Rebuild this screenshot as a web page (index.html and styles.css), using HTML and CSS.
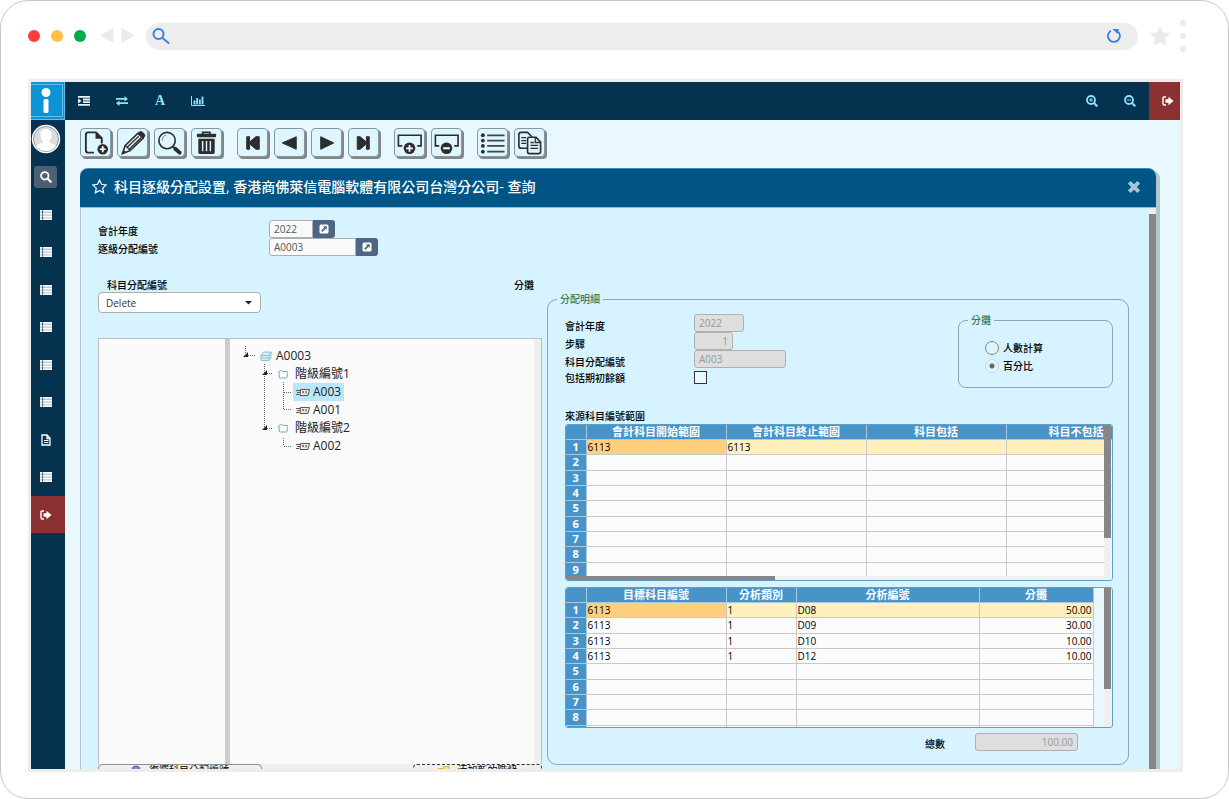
FILE: index.html
```html
<!DOCTYPE html>
<html lang="zh-Hant">
<head>
<meta charset="utf-8">
<title>科目逐級分配設置</title>
<link rel="stylesheet" href="styles.css">
</head>
<body>
<svg class="defs" aria-hidden="true">
  <symbol id="i-list" viewBox="0 0 12 10"><path fill="#b9c8d0" d="M0 0h12v10H0z"/><path fill="#fff" d="M0 0h12v1.500H0zM0 3h12v1.500H0zM0 5.800h12v1.500H0zM0 8.500h12V10H0z"/><path fill="#3c5f75" d="M2.200 0h.9v10h-.9z"/></symbol>
  <symbol id="i-out" viewBox="0 0 12 10"><path fill="none" stroke="currentColor" stroke-width="1.400" d="M4 1H2.200Q1 1 1 2.200v5.600Q1 9 2.200 9H4"/><path fill="currentColor" d="M3.500 3.200H6.500V.8L11.500 5 6.500 9.200V6.800H3.500z"/></symbol>
  <symbol id="i-link" viewBox="0 0 10 10"><rect x=".5" y=".5" width="9" height="9" rx="1.500" fill="#fff"/><path fill="#4d6684" d="M4 2.300h3.700V6L6.500 4.800 3.400 7.900l-1.200-1.200L5.200 3.500z"/></symbol>
  <symbol id="i-form" viewBox="0 0 14 9"><path stroke="#555" fill="none" d="M0 2.500h4M1 4.500h3M0 6.500h3"/><path fill="#e6eadf" stroke="#555" d="M4.500 1.500h9l-1.500 6h-8z"/><path fill="#c33" d="M6.300 3h1.500v2H6.300z"/><path fill="#5a9a5a" d="M9.300 3h1.500v2.500H9.300z"/></symbol>
  <symbol id="i-folder" viewBox="0 0 11 10"><path fill="#fdfeff" stroke="#7fa6c9" d="M.8 2.500 3.500 1.500 5 2.500h4.500v5L8.500 9H1.500z"/><path stroke="#b7d2e8" fill="none" d="M9.500 2.500 8.500 9"/></symbol>
</svg>

<div class="browser">
  <header class="chrome">
    <span class="dot red"></span><span class="dot yellow"></span><span class="dot green"></span>
    <svg class="arrows" width="36" height="16" viewBox="0 0 36 16"><path fill="#ebebeb" d="M13.500 0v15L0 7.500zM21.500 0v15L35 7.500z"/></svg>
    <div class="address">
      <svg width="18" height="18" viewBox="0 0 18 18" fill="none" stroke="#3b7de0" stroke-width="2"><circle cx="6.500" cy="7" r="5"/><path d="m10 10.500 7 6"/></svg>
      <svg width="14" height="16" viewBox="0 0 14 16" fill="none" stroke="#3b7de0" stroke-width="1.800"><path d="M11.300 3.800A6 6 0 1 1 3.800 2.800"/><path fill="#3b7de0" stroke="none" d="m5.500 1 6.500 0-1.500 5z"/></svg>
    </div>
    <svg class="fav" width="22" height="20" viewBox="0 0 22 20"><path fill="#ebebeb" stroke="#ebebeb" stroke-linejoin="round" d="m11 1 3 6 6.500.8-4.800 4.600 1.200 6.600-5.900-3.200L5.100 19l1.200-6.600L1.500 7.800 8 7z"/></svg>
    <svg class="more" width="6" height="32" viewBox="0 0 6 32" fill="#ebebeb"><circle cx="3" cy="3" r="3"/><circle cx="3" cy="16" r="3"/><circle cx="3" cy="29" r="3"/></svg>
  </header>

  <div class="app">
    <nav class="side">
      <a class="logo" href="#" aria-label="首頁"><svg width="34" height="38" viewBox="0 0 34 38"><path fill="#0b93d6" d="M0 0h34v38H0z"/><path fill="none" stroke="#5fc0ee" d="M-1 2.500h32.500v32H-1M0 37.500h33.500V0"/><circle cx="15" cy="10.500" r="4.500" fill="#fff"/><rect x="12.500" y="17" width="5" height="14" rx="1.500" fill="#fff"/></svg></a>
      <svg class="avatar" width="30" height="30" viewBox="0 0 30 30"><circle cx="15" cy="15" r="13.500" fill="#dcdcdc" stroke="#fff" stroke-width="1.500"/><circle cx="15" cy="15" r="12.500" fill="none" stroke="#51708a" stroke-width=".6"/><path fill="#fff" d="M15 5c3.500 0 5.500 2.500 5.500 6 0 2.500-1 5-2.500 6.500.5 2.500 5.500 2 7 4.500A12.500 12.500 0 0 1 5 22c1.500-2.500 6.500-2 7-4.500-1.500-1.500-2.500-4-2.500-6.500 0-3.500 2-6 5.500-6z"/></svg>
      <button class="find" aria-label="搜尋"><svg width="12" height="12" viewBox="0 0 12 12" fill="none" stroke="#fff" stroke-width="1.800"><circle cx="4.800" cy="4.800" r="3.700"/><path stroke-width="2.200" d="m7.800 7.800 3.500 3.500"/></svg></button>
      <ul class="menu">
        <li><a href="#" aria-label="清單"><svg width="12" height="10"><use href="#i-list"/></svg></a></li>
        <li><a href="#" aria-label="清單"><svg width="12" height="10"><use href="#i-list"/></svg></a></li>
        <li><a href="#" aria-label="清單"><svg width="12" height="10"><use href="#i-list"/></svg></a></li>
        <li><a href="#" aria-label="清單"><svg width="12" height="10"><use href="#i-list"/></svg></a></li>
        <li><a href="#" aria-label="清單"><svg width="12" height="10"><use href="#i-list"/></svg></a></li>
        <li><a href="#" aria-label="清單"><svg width="12" height="10"><use href="#i-list"/></svg></a></li>
        <li><a href="#" aria-label="文件"><svg width="12" height="12" viewBox="0 0 12 12"><path fill="none" stroke="#fff" stroke-width="1.300" d="M2 1h5l3 3v7H2zM7 1v3.500h3"/><path stroke="#fff" d="M4 6.500h4.500M4 8.500h4.500"/></svg></a></li>
        <li><a href="#" aria-label="清單"><svg width="12" height="10"><use href="#i-list"/></svg></a></li>
      </ul>
      <a class="exit" href="#" aria-label="登出"><svg width="12" height="10"><use href="#i-out"/></svg></a>
    </nav>

    <div class="main">
      <div class="topbar">
        <button aria-label="縮排"><svg width="12" height="10" viewBox="0 0 12 10"><path fill="#e6f4fa" d="M0 0h12v1.800H0zM5 2.500h7v1.900H5zM5 5.200h7v1.900H5zM0 7.900h12v1.800H0zM0 2.200 3.500 5 0 7.600z"/></svg></button>
        <button aria-label="切換"><svg width="12" height="10" viewBox="0 0 12 10"><path fill="#8fe0f8" d="M0 2h8.500V0L12 2.900 8.500 5.500v-1.800H0zM12 6.300H3.500V4.500L0 7.200l3.500 2.800V8H12z"/></svg></button>
        <button class="letter">A</button>
        <button aria-label="圖表"><svg width="14" height="10" viewBox="0 0 14 10"><path fill="none" stroke="#8fe0f8" d="M.5 0v9.500H14"/><path fill="#8fe0f8" d="M2.500 4.500h2v4h-2zM5.200 2H7v6.500H5.200zM7.900 3.500h1.800v5H7.900zM10.600.5h1.800v8h-1.800z"/></svg></button>
        <span class="grow"></span>
        <button aria-label="放大"><svg width="12" height="12" viewBox="0 0 12 12" fill="none" stroke="#8fe0f8"><circle cx="5" cy="5" r="4" stroke-width="1.800"/><path stroke-width="2.200" d="m8 8 3.300 3.300"/><path d="M3 5h4M5 3v4"/></svg></button>
        <button aria-label="縮小"><svg width="12" height="12" viewBox="0 0 12 12" fill="none" stroke="#8fe0f8"><circle cx="5" cy="5" r="4" stroke-width="1.800"/><path stroke-width="2.200" d="m8 8 3.300 3.300"/><path d="M3 5h4"/></svg></button>
        <button class="quit" aria-label="登出"><svg width="12" height="10"><use href="#i-out"/></svg></button>
      </div>

      <div class="tools">
        <div class="set">
          <button aria-label="新增"><svg viewBox="0 0 29 28"><path fill="none" stroke="#2d2d2d" stroke-width="2" d="M13 24.500H7Q4.500 24.500 4.500 22V6Q4.500 3.500 7 3.500h8l6 6V15"/><path fill="#2d2d2d" d="M14.500 3v7H21z"/><circle cx="22" cy="21" r="5.500" fill="#2d2d2d"/><path stroke="#fff" stroke-width="1.800" d="M19 21h6M22 18v6"/></svg></button>
          <button aria-label="編輯"><svg viewBox="0 0 29 28"><path fill="#e0f5fe" stroke="#2d2d2d" stroke-width="1.600" d="M4 25.500 7 17 20 4.500l5.500 5L12 22.500z"/><path fill="#2d2d2d" d="m20 4 2-1.500q1.500-1 3 .5l2 2q1.500 1.500.3 3L26 9.800zM4 26l1.300-4.500 3 2.800z"/><path stroke="#2d2d2d" stroke-width="1.300" d="M9 19 21 7.500M11 21 23.500 9M7 17l5.500 5.500"/></svg></button>
          <button aria-label="查詢"><svg viewBox="0 0 29 28"><circle cx="12" cy="12" r="8.500" fill="none" stroke="#2d2d2d" stroke-width="1.700"/><path fill="none" stroke="#6b7a80" d="M7 12a5.500 5.500 0 0 1 4-5.500"/><path stroke="#2d2d2d" stroke-width="2" d="m18 18 3 3"/><path stroke="#2d2d2d" stroke-width="4" stroke-linecap="round" d="m20.500 20.500 4.500 4"/></svg></button>
          <button aria-label="刪除"><svg viewBox="0 0 29 28"><path fill="none" stroke="#2d2d2d" stroke-width="1.800" d="M10.500 5.500V3.500h7.500v2"/><rect x="4.500" y="5" width="20" height="3.500" rx="1" fill="#2d2d2d"/><path fill="#2d2d2d" d="M6 10h17v14q0 2-2 2H8q-2 0-2-2z"/><path stroke="#dff5fe" stroke-width="1.500" d="M10.500 12.500v10.500M14.500 12.500v10.500M18.500 12.500v10.500"/></svg></button>
        </div>
        <div class="set">
          <button aria-label="第一筆"><svg viewBox="0 0 29 28"><path fill="#2d2d2d" stroke="#2d2d2d" stroke-linejoin="round" d="M8.500 8h3v5.500L18 8h3.500v13H18l-6.500-5.500V21h-3z"/></svg></button>
          <button aria-label="上一筆"><svg viewBox="0 0 29 28"><path fill="#2d2d2d" stroke="#2d2d2d" stroke-linejoin="round" d="M7 14.500 21.500 8v13z"/></svg></button>
          <button aria-label="下一筆"><svg viewBox="0 0 29 28"><path fill="#2d2d2d" stroke="#2d2d2d" stroke-linejoin="round" d="M22 14.500 8.500 8v13z"/></svg></button>
          <button aria-label="最後一筆"><svg viewBox="0 0 29 28"><path fill="#2d2d2d" stroke="#2d2d2d" stroke-linejoin="round" d="M20.500 8h-3v5.500L11 8H8v13h3l6.500-5.500V21h3z"/></svg></button>
        </div>
        <div class="set">
          <button aria-label="插入"><svg viewBox="0 0 29 28"><path fill="none" stroke="#2d2d2d" stroke-width="1.700" d="M7 17.500H3V6.500h23.500v11h-4"/><circle cx="14.500" cy="20" r="6" fill="#2d2d2d"/><path stroke="#fff" stroke-width="1.800" d="M11 20h7M14.500 16.500v7"/></svg></button>
          <button aria-label="移除"><svg viewBox="0 0 29 28"><path fill="none" stroke="#2d2d2d" stroke-width="1.700" d="M7 17.500H3V6.500h23.500v11h-4"/><circle cx="14.500" cy="20" r="6" fill="#2d2d2d"/><path stroke="#fff" stroke-width="2" d="M11 20h7"/></svg></button>
        </div>
        <div class="set">
          <button aria-label="清單"><svg viewBox="0 0 29 28"><path stroke="#3c4548" stroke-width="1.800" d="M9 6.500h18M9 12h18M9 17.500h18M9 23.500h18"/><g fill="#2d2d2d"><circle cx="4.500" cy="6.500" r="2"/><circle cx="4.500" cy="12" r="2"/><circle cx="4.500" cy="17.500" r="2"/><circle cx="4.500" cy="23.500" r="2"/></g></svg></button>
          <button aria-label="複製"><svg viewBox="0 0 29 28"><g fill="#dff5fe" stroke="#2d2d2d" stroke-width="1.700" stroke-linejoin="round"><path d="M6 3.500h6.500l4 4V20H6q-2.500 0-2.500-2V5.500Q3.500 3.500 6 3.500z"/><path d="M14.500 8.500H21l5 5v10q0 2-2 2h-9.500q-2 0-2-2v-13q0-2 2-2z"/></g><path fill="none" stroke="#2d2d2d" stroke-width="1.300" d="M6 9h5M6 12h5M6 15h5M20.500 9v5H26M15.500 14h3.500M15.500 17h8M15.500 20h8"/></svg></button>
        </div>
      </div>

      <section class="window">
        <header class="title">
          <svg width="15" height="15" viewBox="0 0 15 15" fill="none" stroke="#fff" stroke-width="1.200"><path d="m7.500 1 2 4.300 4.700.6-3.500 3.200.9 4.700-4.100-2.300-4.100 2.300.9-4.700L.8 5.900l4.700-.6z"/></svg>
          <h1>科目逐級分配設置, 香港商佛萊信電腦軟體有限公司台灣分公司- 查詢</h1>
          <button aria-label="關閉"><svg width="12" height="12" viewBox="0 0 12 12"><path stroke="#a9c6d8" stroke-width="3.800" d="m1.300 1.300 9.400 9.400M10.700 1.300l-9.400 9.400"/></svg></button>
        </header>
        <div class="pane">
          <form class="content">
            <div class="filters">
              <label for="year">會計年度</label>
              <div class="lookup"><input id="year" class="field year" value="2022"><button type="button" aria-label="選擇年度"><svg width="10" height="10"><use href="#i-link"/></svg></button></div>
              <label for="code">逐級分配編號</label>
              <div class="lookup"><input id="code" class="field code" value="A0003"><button type="button" aria-label="選擇編號"><svg width="10" height="10"><use href="#i-link"/></svg></button></div>
            </div>

            <div class="split">
              <div class="left">
                <div class="heads"><label for="action">科目分配編號</label><span>分攤</span></div>
                <div class="pick">
                  <select id="action"><option>Delete</option></select>
                  <svg width="7" height="4" viewBox="0 0 7 4"><path fill="#222" d="M0 0h7L3.500 3.500z"/></svg>
                </div>
                <div class="panel">
                  <div class="blank"></div>
                  <div class="treebox">
                    <svg class="wires" width="64" height="110" viewBox="0 0 64 110"><path fill="none" stroke="#666" stroke-dasharray="1 1" d="M5.500 0v7M6 9.500h9M24.500 18v64M25 27.500h8M25 82.500h8M43.500 36v28M44 46.500h8M44 63.500h8M43.500 92v8M44 100.500h8"/><path fill="#222" d="M3 11h5V6zM22 29h5v-5zM22 84h5v-5z"/></svg>
                    <ul class="tree">
                      <li><span class="node"><svg width="12" height="12" viewBox="0 0 12 12"><path fill="#d5eef8" stroke="#79b4cf" stroke-width=".8" d="M1 5.500 3.500 2H11v5.500L9 10.500H1zM1 5.500h8v5M9 5.500 11 2M1 8h8"/></svg>A0003</span>
                        <ul>
                          <li><span class="node"><svg width="11" height="10"><use href="#i-folder"/></svg>階級編號1</span>
                            <ul>
                              <li><span class="node on"><svg width="14" height="9"><use href="#i-form"/></svg>A003</span></li>
                              <li><span class="node"><svg width="14" height="9"><use href="#i-form"/></svg>A001</span></li>
                            </ul>
                          </li>
                          <li><span class="node"><svg width="11" height="10"><use href="#i-folder"/></svg>階級編號2</span>
                            <ul>
                              <li><span class="node"><svg width="14" height="9"><use href="#i-form"/></svg>A002</span></li>
                            </ul>
                          </li>
                        </ul>
                      </li>
                    </ul>
                  </div>
                </div>
                <div class="actions">
                  <button type="button"><svg width="10" height="10" viewBox="0 0 10 10"><circle cx="5" cy="5" r="4" fill="#8a93d6" stroke="#4a55b0"/></svg>復選科目分配編號</button>
                  <button type="button" class="dashed"><svg width="12" height="10" viewBox="0 0 12 10"><path fill="#f4dc8c" stroke="#d9b44a" d="M.5 3.500 5 3.500 6 1.500h5v8H.5z"/></svg>添加新的階級</button>
                </div>
              </div>

              <fieldset class="detail">
                <legend>分配明細</legend>
                <div class="top">
                  <div class="info">
                    <label for="d-year">會計年度</label><input id="d-year" class="field w50" value="2022" disabled>
                    <label for="d-step">步驟</label><input id="d-step" class="field w39 num" value="1" disabled>
                    <label for="d-code">科目分配編號</label><input id="d-code" class="field w92" value="A003" disabled>
                    <label for="d-open" class="tight">包括期初餘額</label><input id="d-open" class="check" type="checkbox">
                  </div>
                  <fieldset class="share">
                    <legend>分攤</legend>
                    <label><input type="radio" name="share">人數計算</label>
                    <label><input type="radio" name="share" checked>百分比</label>
                  </fieldset>
                </div>

                <p class="caption">來源科目編號範圍</p>
                <div class="grid source">
                  <table>
                    <colgroup><col class="c-no"><col class="c-140"><col class="c-140"><col class="c-140"><col class="c-140"></colgroup>
                    <thead><tr><th></th><th>會計科目開始範圍</th><th>會計科目終止範圍</th><th>科目包括</th><th>科目不包括</th></tr></thead>
                    <tbody>
                      <tr class="sel"><th>1</th><td class="cur">6113</td><td>6113</td><td></td><td></td></tr>
                      <tr><th>2</th><td></td><td></td><td></td><td></td></tr>
                      <tr><th>3</th><td></td><td></td><td></td><td></td></tr>
                      <tr><th>4</th><td></td><td></td><td></td><td></td></tr>
                      <tr><th>5</th><td></td><td></td><td></td><td></td></tr>
                      <tr><th>6</th><td></td><td></td><td></td><td></td></tr>
                      <tr><th>7</th><td></td><td></td><td></td><td></td></tr>
                      <tr><th>8</th><td></td><td></td><td></td><td></td></tr>
                      <tr><th>9</th><td></td><td></td><td></td><td></td></tr>
                    </tbody>
                  </table>
                  <div class="vbar"><div class="thumb"></div></div>
                  <div class="hbar"><div class="thumb"></div></div>
                </div>

                <div class="grid target">
                  <table>
                    <colgroup><col class="c-no"><col class="c-140"><col class="c-70"><col class="c-183"><col class="c-114"></colgroup>
                    <thead><tr><th></th><th>目標科目編號</th><th>分析類別</th><th>分析編號</th><th>分攤</th></tr></thead>
                    <tbody>
                      <tr class="sel"><th>1</th><td class="cur">6113</td><td>1</td><td>D08</td><td class="num">50.00</td></tr>
                      <tr><th>2</th><td>6113</td><td>1</td><td>D09</td><td class="num">30.00</td></tr>
                      <tr><th>3</th><td>6113</td><td>1</td><td>D10</td><td class="num">10.00</td></tr>
                      <tr><th>4</th><td>6113</td><td>1</td><td>D12</td><td class="num">10.00</td></tr>
                      <tr><th>5</th><td></td><td></td><td></td><td></td></tr>
                      <tr><th>6</th><td></td><td></td><td></td><td></td></tr>
                      <tr><th>7</th><td></td><td></td><td></td><td></td></tr>
                      <tr><th>8</th><td></td><td></td><td></td><td></td></tr>
                      <tr><th>&nbsp;</th><td></td><td></td><td></td><td></td></tr>
                    </tbody>
                  </table>
                  <div class="vbar"><div class="thumb"></div></div>
                </div>

                <div class="total"><label for="total">總數</label><input id="total" class="field w103 num" value="100.00" disabled></div>
              </fieldset>
            </div>
          </form>
          <div class="scroll"><div class="thumb"></div></div>
        </div>
      </section>
    </div>
  </div>
</div>
</body>
</html>
```
FILE: styles.css
```css
* { box-sizing: border-box; }

body {
  margin: 0;
  background: #fff;
  font: 10px/14px "Open Sans", "Noto Sans CJK TC", sans-serif;
  color: #000;
}

button, input, select { font: inherit; color: inherit; margin: 0; }
button { padding: 0; border: 0; background: none; }
svg { display: block; flex: none; }
ul { list-style: none; margin: 0; padding: 0; }
.defs { position: absolute; width: 0; height: 0; }

/* Browser frame */
.browser {
  height: 100vh;
  display: flex;
  flex-direction: column;
  padding: 0 45px 26px 27px;
  border: 1px solid #c8c8c8;
  border-radius: 28px;
  overflow: hidden;
}
.chrome { flex: none; height: 78px; padding-bottom: 8px; display: flex; align-items: center; }
.dot { width: 12px; height: 12px; border-radius: 50%; margin-right: 11px; }
.dot.red { background: #ff3d3d; }
.dot.yellow { background: #ffc04a; }
.dot.green { background: #00ac4a; }
.arrows { margin: 0 10px 0 3px; }
.address {
  flex: 1;
  height: 27px;
  padding: 0 17px 0 6px;
  border-radius: 14px;
  background: #ededed;
  display: flex;
  align-items: center;
  justify-content: space-between;
}
.fav { margin: 0 9px 0 11px; }
.more { margin-right: -3px; }

/* Application shell */
.app { flex: 1; min-height: 0; display: flex; border: 3px solid #ededed; overflow: hidden; }
.side { flex: none; width: 34px; background: #04324f; display: flex; flex-direction: column; }
.avatar { margin: 4px 0 0; }
.find {
  width: 23px;
  height: 22px;
  margin: 12px 0 8px 3px;
  border-radius: 3px;
  background: #4c6072;
  display: flex;
  align-items: center;
  justify-content: center;
}
.menu { height: 300px; display: grid; grid-auto-rows: 1fr; }
.menu li { display: flex; align-items: center; padding-left: 9px; }
.exit { height: 37px; padding-left: 9px; display: flex; align-items: center; background: #8c3131; color: #fff; }

.main { flex: 1; min-width: 0; display: flex; flex-direction: column; background: #e9f8ff; }
.topbar { flex: none; height: 38px; display: flex; background: #04324f; }
.topbar button { width: 38px; display: flex; align-items: center; justify-content: center; }
.topbar .letter { color: #8fe0f8; font: bold 14px/38px "Liberation Serif", serif; }
.topbar .grow { flex: 1; }
.topbar .quit { width: 31px; padding-left: 6px; background: #8c3131; color: #fff; }

.tools { flex: none; display: flex; gap: 15px; padding: 8px 15px 11px; }
.set { display: flex; gap: 6px; }
.tools button {
  width: 31px;
  height: 29px;
  border: 1px solid #7d98a8;
  border-radius: 4px;
  background: #e0f6ff;
  box-shadow: 2px 2px 0 #858585;
}
.tools svg { width: 29px; height: 27px; }

/* Document window */
.window {
  flex: 1;
  min-height: 0;
  display: flex;
  flex-direction: column;
  margin: 0 24px 0 15px;
  border-radius: 8px 8px 0 0;
  box-shadow: 4px 3px 0 #b6c5ca;
}
.title {
  flex: none;
  height: 39px;
  padding: 0 16px 3px 12px;
  display: flex;
  align-items: center;
  background: #005587;
  border-top: 1px solid #4a88ab;
  border-radius: 8px 8px 0 0;
  color: #fff;
}
.title h1 { flex: 1; margin: 0 0 0 7px; font-size: 14px; line-height: 20px; font-weight: 500; }
.pane { flex: 1; min-height: 0; display: flex; border-top: 1px solid #9db9c6; border-left: 1px solid #b3c3ca; background: #d7f3ff; }
.scroll { flex: none; width: 7px; padding-top: 6px; background: #efefef; display: flex; }
.scroll .thumb { flex: 1; background: #868686; }

.content { flex: 1; min-width: 0; display: flex; flex-direction: column; padding: 12px 20px 0 17px; overflow: hidden; }
.content label, .heads, .caption, legend { font-weight: 500; }
.filters { flex: none; display: grid; grid-template-columns: 171px auto; grid-auto-rows: 18px; justify-content: start; }
.filters label { padding-top: 4px; }

.field {
  height: 18px;
  padding: 0 4px;
  border: 1px solid #a9b0b3;
  border-radius: 3px;
  background: #fafafa;
  color: #555;
}
.field:disabled { background: #dedede; border-color: #b0b0b0; color: #999; }
.num { text-align: right; }
.lookup { display: flex; }
.lookup .field { border-radius: 3px 0 0 3px; }
.lookup button {
  width: 22px;
  height: 18px;
  display: flex;
  align-items: center;
  justify-content: center;
  border-radius: 0 3px 3px 0;
  background: #4d6684;
}
.year { width: 44px; }
.code { width: 87px; }
.w50 { width: 50px; }
.w39 { width: 39px; }
.w92 { width: 92px; }
.w103 { width: 103px; }

.split { flex: 1; min-height: 0; margin-top: 22px; display: grid; grid-template-columns: 444px minmax(0, 1fr); gap: 5px; }

/* Left column */
.left { display: flex; flex-direction: column; height: 508px; }
.heads { display: flex; justify-content: space-between; padding: 0 8px 0 9px; }
.pick { flex: none; width: 163px; height: 21px; margin-bottom: 25px; display: grid; align-items: center; }
.pick select {
  appearance: none;
  grid-area: 1 / 1;
  height: 21px;
  padding: 0 7px;
  border: 1px solid #a9b0b3;
  border-radius: 4px;
  background: #fff;
  color: #333;
}
.pick svg { grid-area: 1 / 1; justify-self: end; margin-right: 9px; pointer-events: none; }
.panel { flex: 1; display: flex; border: 1px solid #b9c0c3; border-bottom: 0; background: #fafafa; }
.blank { width: 131px; border-right: 5px solid #ccc; }
.treebox { flex: 1; position: relative; padding: 8px 0 0 30px; border-right: 7px solid #efefef; }
.wires { position: absolute; left: 10px; top: 7px; }
.tree { font-size: 12px; line-height: 18px; color: #222; }
.tree ul { padding-left: 18px; }
.tree li { display: flex; flex-direction: column; align-items: flex-start; }
.node { display: flex; align-items: center; gap: 4px; height: 18px; }
.tree ul .node { gap: 6px; }
.tree ul ul { padding-left: 15px; }
.tree ul ul .node { gap: 3px; padding: 0 3px; }
.tree .node.on { background: #b9e6fd; }
.actions { flex: none; display: flex; justify-content: space-between; background: #efefef; }
.actions button {
  width: 164px;
  height: 22px;
  display: flex;
  align-items: flex-start;
  justify-content: center;
  gap: 8px;
  border: 1px solid #8a9290;
  border-radius: 4px;
  background: #efefef;
  line-height: 10px;
}
.actions .dashed { width: 129px; border: 1px dashed #333; }

/* Allocation detail */
fieldset { min-width: 0; margin: 0; border: 1px solid #8aa5b0; border-radius: 10px; }
legend { margin-left: -5px; padding: 0 3px; color: #3c7a55; }
.detail { align-self: start; margin-top: 14px; padding: 7px 15px 13px 17px; }
.detail > legend { margin-left: -8px; }
.top { display: flex; justify-content: space-between; align-items: flex-start; }
.info { display: grid; grid-template-columns: 129px auto; grid-auto-rows: 18px; align-items: start; padding-top: 1px; }
.info label { padding-top: 5px; }
.info .tight { padding-top: 3px; }
.check { appearance: none; width: 13px; height: 13px; margin-top: 3px; border: 1px solid #333; background: #e9f8ff; }
.share { width: 155px; padding: 12px 10px 12px 26px; border-radius: 8px; }
.share legend { margin-left: -17px; }
.share label { display: flex; align-items: center; gap: 4px; height: 18px; }
.share input {
  appearance: none;
  width: 14px;
  height: 14px;
  border: 1px solid #7b868b;
  border-radius: 50%;
  background: #dff5fe;
}
.share input:checked { border-color: #c5d9e2; background: radial-gradient(circle, #666 0 2px, transparent 3px) #dff5fe; }

.caption { margin: 21px 0 0; line-height: 15px; }

.grid { position: relative; overflow: hidden; border: 1px solid #5f9fc4; border-radius: 3px; background: #e9f8ff; }
.grid table { table-layout: fixed; border-collapse: collapse; background: #fcfcfc; line-height: 14px; }
.grid th, .grid td { padding: 0 1px; border: 1px solid #c9c9c9; border-width: 0 1px 1px 0; overflow: hidden; white-space: nowrap; }
.grid th { background: #4894c9; color: #fff; border-color: #a9cbe0; }
.grid thead th { font-size: 11px; font-weight: bold; }
.grid tbody th { font-size: 11px; padding: 0; }
.grid td { font-weight: 500; }
.grid .sel td { background: #fff0bd; }
.grid .sel .cur { background: #ffcf7d; }
.c-no { width: 20px; }
.c-140 { width: 140px; }
.c-70 { width: 70px; }
.c-183 { width: 183px; }
.c-114 { width: 114px; }
.source { height: 157px; }
.source table { width: 580px; height: 153px; }
.target { height: 141px; margin-top: 6px; }
.target table { width: 527px; height: 153px; }

/* Scroll bars laid over the grids */
.vbar { position: absolute; top: 0; right: 1px; bottom: 0; width: 7px; background: #efefef; }
.vbar .thumb { height: 73%; background: #868686; }
.hbar { position: absolute; left: 0; right: 0; bottom: 0; height: 4px; background: #efefef; }
.hbar .thumb { width: 209px; height: 4px; background: #868686; }

.total { display: flex; justify-content: flex-end; align-items: center; gap: 30px; padding: 5px 35px 0 0; }
.total label { padding-top: 4px; }
```
